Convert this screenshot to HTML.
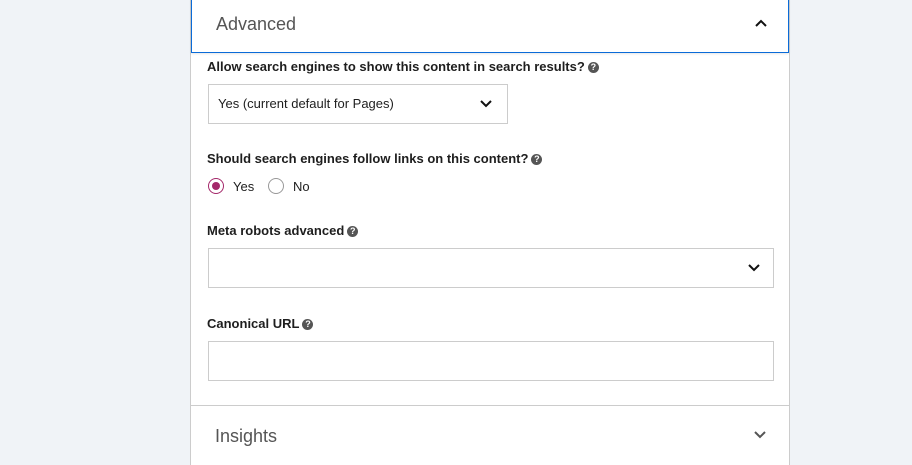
<!DOCTYPE html>
<html><head><style>
body{margin:0;width:912px;height:465px;background:#f0f3f7;font-family:"Liberation Sans",sans-serif;overflow:hidden;position:relative;color:#1e1e1e}
.panel{position:absolute;left:190px;top:0;width:598px;height:465px;background:#fff;border-left:1px solid #ccc;border-right:1px solid #ccc}
.hdr{position:absolute;left:0;top:-2px;width:596px;height:54px;border:1px solid #0a6bd8;border-top:none;box-shadow:0 1px 2px rgba(0,0,0,.1)}
.t{position:absolute;font-size:18px;color:#555}
.lbl{position:absolute;left:16px;font-size:13px;font-weight:bold;color:#1e1e1e}
.q{display:inline-block;width:11px;height:11px;border-radius:50%;background:#555;color:#fff;font-size:9px;text-align:center;line-height:11px;vertical-align:1px;margin-left:3px}
.box{position:absolute;border:1px solid #ccc;background:#fff;box-sizing:border-box}
.chev{position:absolute}
.radio{position:absolute;width:16px;height:16px;border:1px solid #999;border-radius:50%;box-sizing:border-box;top:178px}
</style></head><body>
<div class="panel">
<div class="hdr"><div class="t" style="left:24px;top:16px">Advanced</div>
<svg class="chev" style="left:562px;top:20px" width="14" height="10"><path d="M2 8 L7 3 L12 8" stroke="#111" stroke-width="2" fill="none"/></svg></div>
<div class="lbl" style="top:59px">Allow search engines to show this content in search results?<span class="q">?</span></div>
<div class="box" style="left:17px;top:84px;width:300px;height:40px"><span style="position:absolute;left:9px;top:11px;font-size:13px">Yes (current default for Pages)</span>
<svg class="chev" style="left:270px;top:14px" width="14" height="10"><path d="M2 2 L7 7 L12 2" stroke="#111" stroke-width="2" fill="none"/></svg></div>
<div class="lbl" style="top:151px">Should search engines follow links on this content?<span class="q">?</span></div>
<div class="radio" style="left:17px;border-color:#a4286a"><div style="position:absolute;left:3px;top:3px;width:8px;height:8px;border-radius:50%;background:#a4286a"></div></div>
<span style="position:absolute;left:42px;top:179px;font-size:13px">Yes</span>
<div class="radio" style="left:77px"></div>
<span style="position:absolute;left:102px;top:179px;font-size:13px">No</span>
<div class="lbl" style="top:223px">Meta robots advanced<span class="q">?</span></div>
<div class="box" style="left:17px;top:248px;width:566px;height:40px">
<svg class="chev" style="left:538px;top:14px" width="14" height="10"><path d="M2 2 L7 7 L12 2" stroke="#111" stroke-width="2" fill="none"/></svg></div>
<div class="lbl" style="top:316px">Canonical URL<span class="q">?</span></div>
<div class="box" style="left:17px;top:341px;width:566px;height:40px"></div>
<div style="position:absolute;left:0;top:405px;width:598px;border-top:1px solid #ccc"></div>
<div class="t" style="left:24px;top:426px">Insights</div>
<svg class="chev" style="left:562px;top:430px" width="14" height="10"><path d="M2 2 L7 7 L12 2" stroke="#555" stroke-width="2" fill="none"/></svg>
</div>
</body></html>
